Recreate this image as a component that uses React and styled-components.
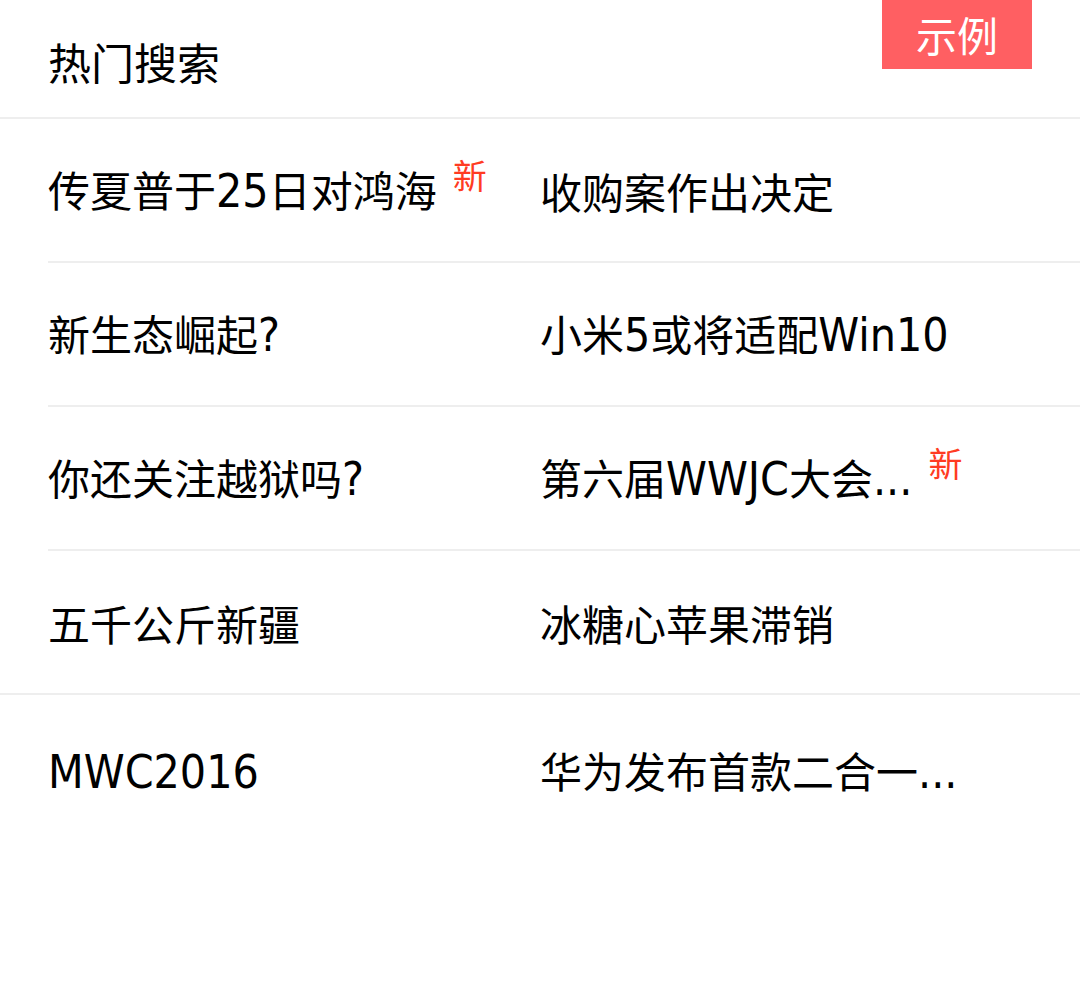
import React from "react";
import styled, { createGlobalStyle } from "styled-components";

const GlobalStyle = createGlobalStyle`
  html, body {
    margin: 0;
    padding: 0;
    background: #ffffff;
  }
  body {
    font-family: "Noto Sans CJK SC", sans-serif;
    color: #000000;
  }
`;

const Page = styled.div`
  position: relative;
  width: 1080px;
  min-height: 984px;
  background: #ffffff;
`;

const Header = styled.div`
  height: 119px;
  box-sizing: border-box;
  display: flex;
  align-items: center;
  padding: 6px 0 0 48px;
  border-bottom: 2px solid #eeeeee;
  font-size: 43px;
  line-height: 1;
  color: #000;
`;

const Badge = styled.div`
  position: absolute;
  top: 0;
  right: 48px;
  width: 150px;
  height: 69px;
  background: #ff5f62;
  color: #ffffff;
  font-size: 41px;
  line-height: 1;
  display: flex;
  align-items: center;
  justify-content: center;
`;

const List = styled.div`
  display: flex;
  flex-direction: column;
`;

const Row = styled.div`
  display: grid;
  grid-template-columns: 492px 1fr;
  margin-left: ${(p) => (p.$full ? "0" : "48px")};
  padding-left: ${(p) => (p.$full ? "48px" : "0")};
  border-bottom: ${(p) => (p.$last ? "none" : "2px solid #eeeeee")};
  height: ${(p) => (p.$last ? "152px" : "142px")};
`;

const Cell = styled.div`
  display: flex;
  align-items: center;
  padding-top: 2px;
  white-space: nowrap;
  color: #000;
`;

const Text = styled.span`
  font-size: 42px;
  line-height: 1;
`;

const Latin = styled.span`
  font-family: "DejaVu Sans Condensed", "Liberation Sans", sans-serif;
  font-size: 46px;
  line-height: 1;
`;

const NewTag = styled.span`
  margin-left: 16px;
  margin-bottom: 32px;
  font-size: 34px;
  line-height: 1;
  color: #ff3b22;
`;

const rows = [
  [{ t: "传夏普于25日对鸿海", n: true }, { t: "收购案作出决定" }],
  [{ t: "新生态崛起?" }, { t: "小米5或将适配Win10" }],
  [{ t: "你还关注越狱吗?" }, { t: "第六届WWJC大会...", n: true }],
  [{ t: "五千公斤新疆" }, { t: "冰糖心苹果滞销" }],
  [{ t: "MWC2016" }, { t: "华为发布首款二合一..." }],
];

function Mixed({ text }) {
  const parts = text.split(/([A-Za-z0-9?.]+)/).filter(Boolean);
  return (
    <Text>
      {parts.map((p, i) =>
        /^[A-Za-z0-9?.]+$/.test(p) ? <Latin key={i}>{p}</Latin> : <React.Fragment key={i}>{p}</React.Fragment>
      )}
    </Text>
  );
}

export default function App() {
  return (
    <Page>
      <GlobalStyle />
      <Header>热门搜索</Header>
      <Badge>示例</Badge>
      <List>
        {rows.map((r, i) => (
          <Row key={i} $full={i === 3} $last={i === rows.length - 1}>
            {r.map((c, j) => (
              <Cell key={j}>
                <Mixed text={c.t} />
                {c.n && <NewTag>新</NewTag>}
              </Cell>
            ))}
          </Row>
        ))}
      </List>
    </Page>
  );
}
